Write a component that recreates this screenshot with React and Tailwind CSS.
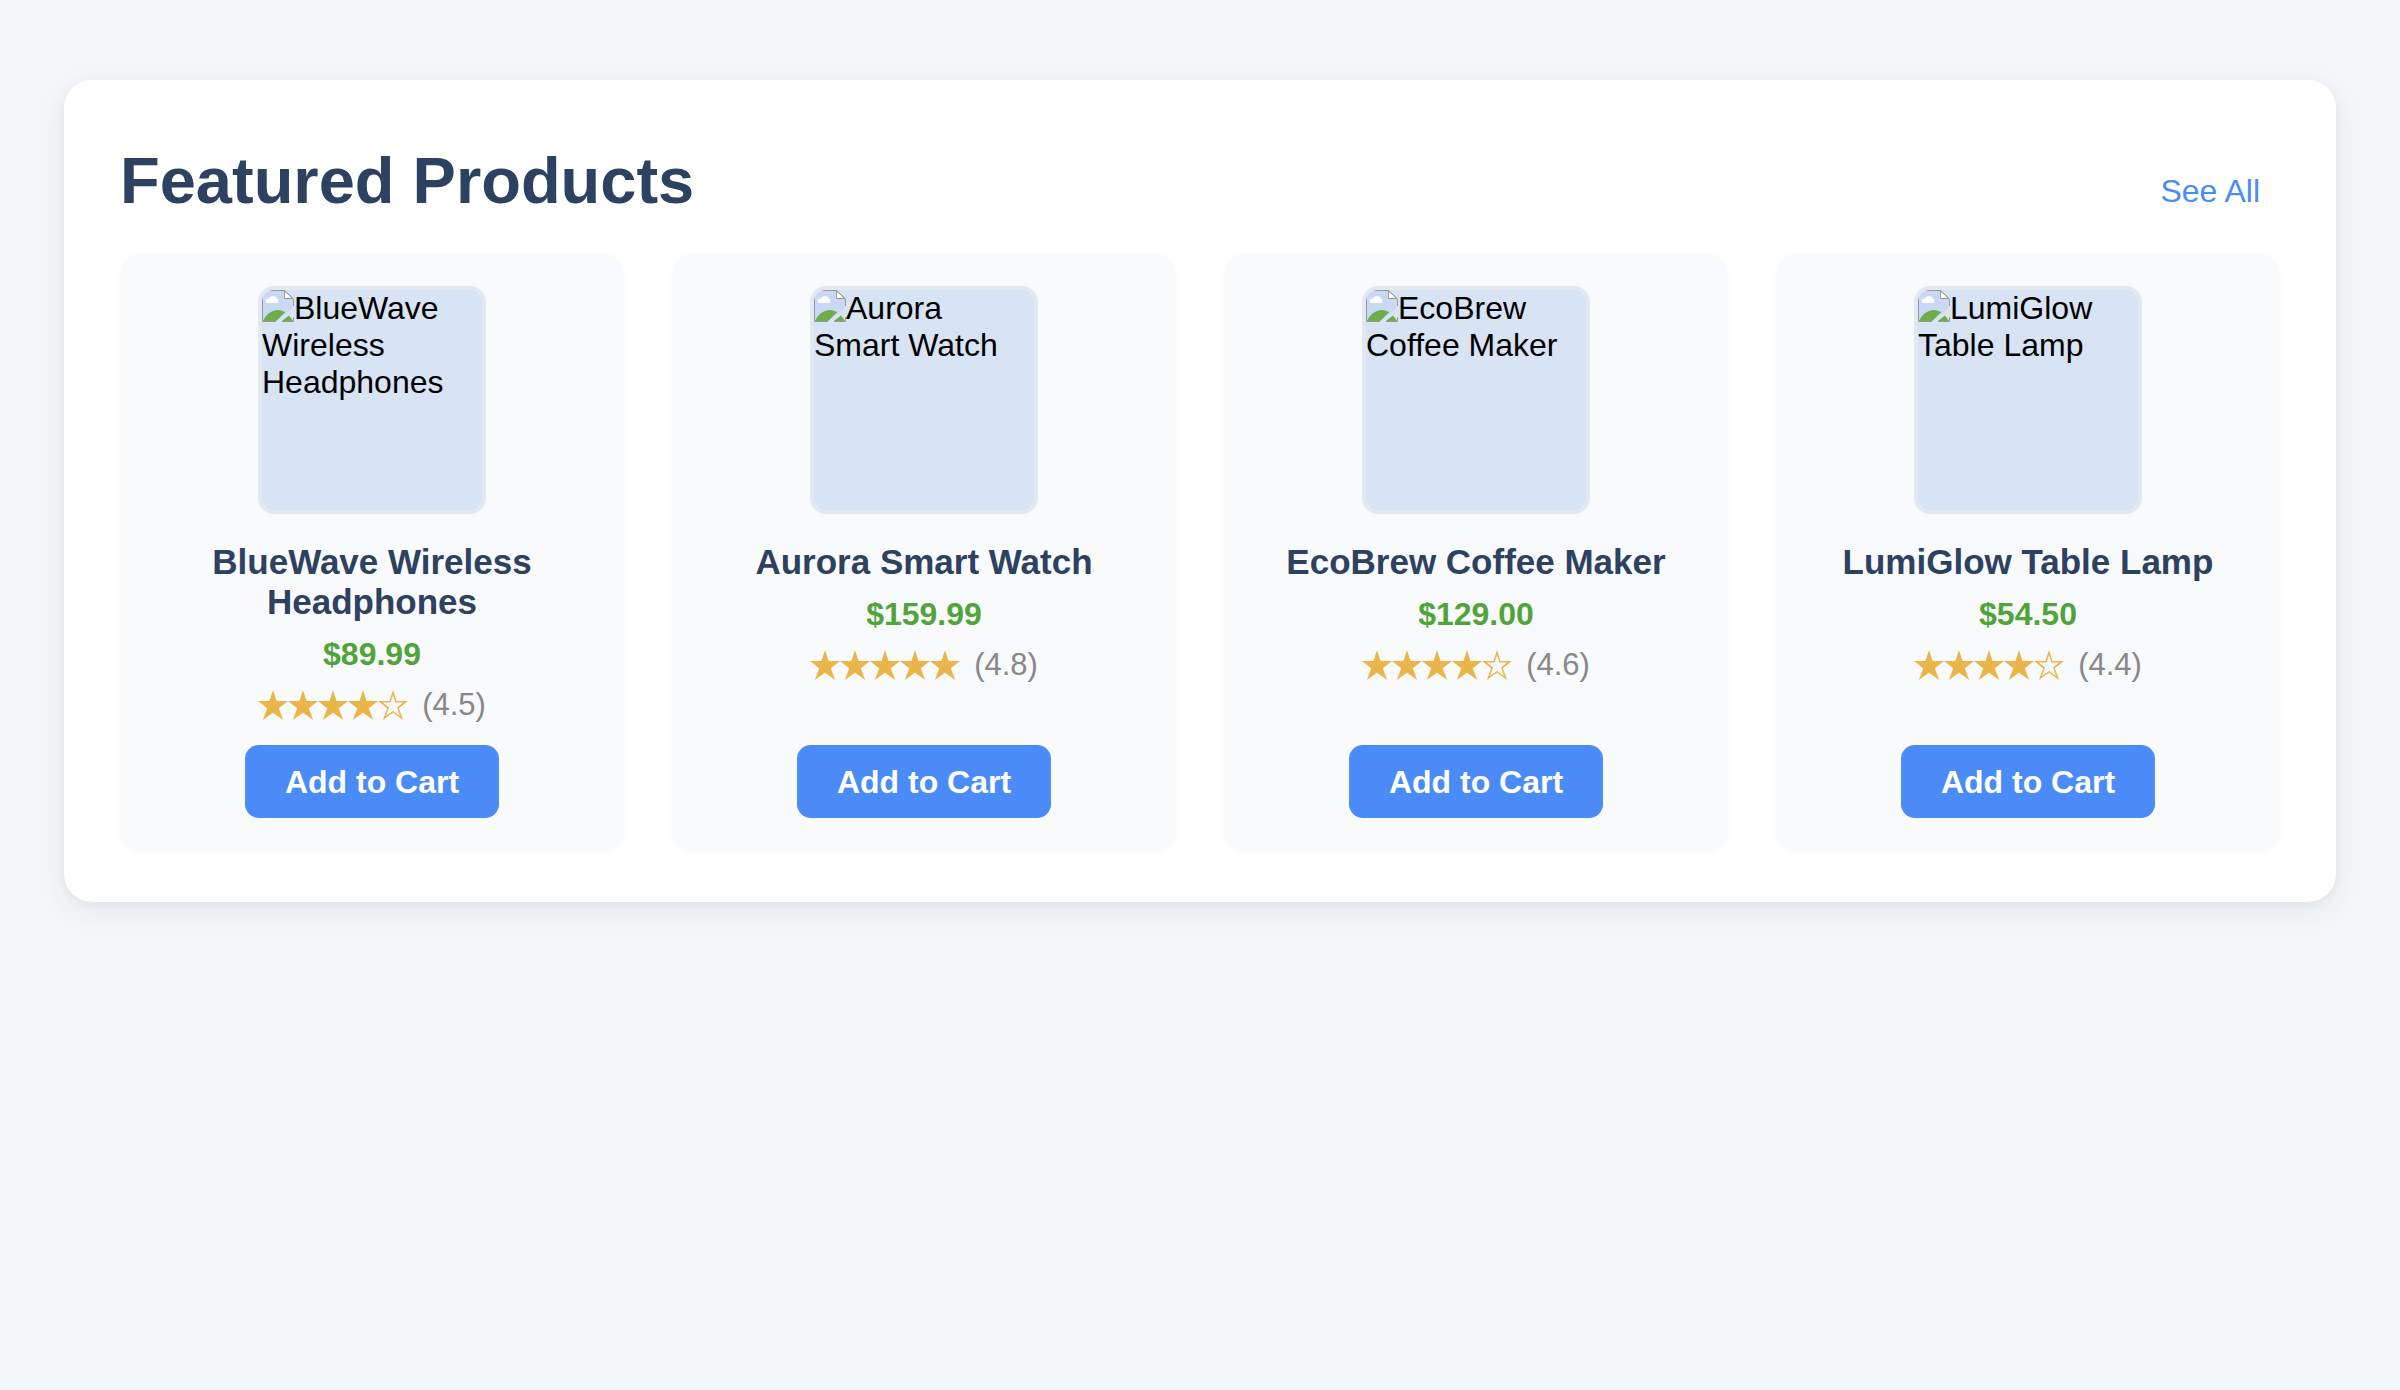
const products = [
  { name: "BlueWave Wireless Headphones", price: "$89.99", stars: "★★★★☆", score: "(4.5)" },
  { name: "Aurora Smart Watch", price: "$159.99", stars: "★★★★★", score: "(4.8)" },
  { name: "EcoBrew Coffee Maker", price: "$129.00", stars: "★★★★☆", score: "(4.6)" },
  { name: "LumiGlow Table Lamp", price: "$54.50", stars: "★★★★☆", score: "(4.4)" },
];

function BrokenImage() {
  return (
    <svg viewBox="0 0 32 32" className="inline-block h-8 w-8 align-top" aria-hidden="true">
      <path d="M1 1H23L31 9V17L15 31H1Z" fill="#c9d9f5" />
      <path d="M4 13c-1.500-3 1-5 3-4.500 1-3.500 7-3.500 7.500 0 2 0 2.500 3 1 4.500z" fill="#fff" />
      <path d="M1 31C4 24 10 20 16 20C19 20 21 21 23 22.500L14 31Z" fill="#6fac4a" />
      <path d="M20 31L27 25.500L31 31Z" fill="#6fac4a" />
      <path d="M22.500 1V8.500H31Z" fill="#fff" stroke="#999" strokeWidth="1" />
      <path d="M.5 31.500V.5H22.500L31.500 9V16M.5 31.500H14M20 31.500H31.500V27" fill="none" stroke="#999" strokeWidth="1" />
    </svg>
  );
}

function Star({ filled }) {
  const outer = "M15 0L18.500 11H30L20.800 18.200L25.200 30L15 22.800L4.800 30L9.200 18.200L0 11H11.500Z";
  const inner = "M15 5L12.600 12.500H4.700L11 17.500L8 26L15 21L22 26L19 17.500L25.300 12.500H17.400Z";
  return (
    <svg viewBox="0 0 30 30" className="h-[30px] w-[30px]" aria-hidden="true">
      <path d={filled ? outer : outer + inner} fillRule="evenodd" fill="#ebb54a" />
    </svg>
  );
}

function ProductCard({ product }) {
  return (
    <li className="flex flex-col items-center rounded-[20px] bg-[#f9fafc] px-8 pt-8 pb-[34px] shadow-[0_2px_8px_rgba(0,0,0,0.02)]">
      <div className="mb-7 h-[228px] w-[228px] overflow-hidden rounded-2xl border-4 border-[#e2e9f1] bg-[#d8e3f3] text-[32px] leading-[37px] text-black">
        <BrokenImage />
        {product.name}
      </div>
      <h2 className="mb-3 text-center text-[35px] leading-[40px] font-bold text-[#2d4160]">{product.name}</h2>
      <p className="mb-3 text-[32px] leading-[40px] font-bold text-[#50a43a]">{product.price}</p>
      <div className="mb-[22px] flex items-center">
        <span className="flex" role="img" aria-label={product.stars}>
          {[...product.stars].map((s, i) => (
            <Star key={i} filled={s === "★"} />
          ))}
        </span>
        <span className="ml-[14px] text-[31px] leading-[37px] text-[#888888]">{product.score}</span>
      </div>
      <button type="button" className="mt-auto h-[73px] rounded-[14px] bg-[#4a8bf8] px-10 text-[32px] font-bold text-white">
        Add to Cart
      </button>
    </li>
  );
}

export default function App() {
  return (
    <div className="min-h-screen bg-[#f5f6f8] px-16 py-20 font-['Liberation_Sans',Arial,sans-serif]">
      <main className="rounded-[28px] bg-white px-14 pt-16 pb-[50px] shadow-[0_8px_32px_rgba(44,62,80,0.07),0_3px_8px_rgba(44,62,80,0.05)]">
        <header className="mb-9 flex items-end justify-between">
          <h1 className="text-[65px] leading-[74px] font-bold text-[#2d4160]">Featured Products</h1>
          <a href="#all" className="mb-1 px-5 text-[32px] leading-[46px] text-[#4a8bf8]">See All</a>
        </header>
        <ul className="grid grid-cols-4 gap-12">
          {products.map((p) => (
            <ProductCard key={p.name} product={p} />
          ))}
        </ul>
      </main>
    </div>
  );
}
